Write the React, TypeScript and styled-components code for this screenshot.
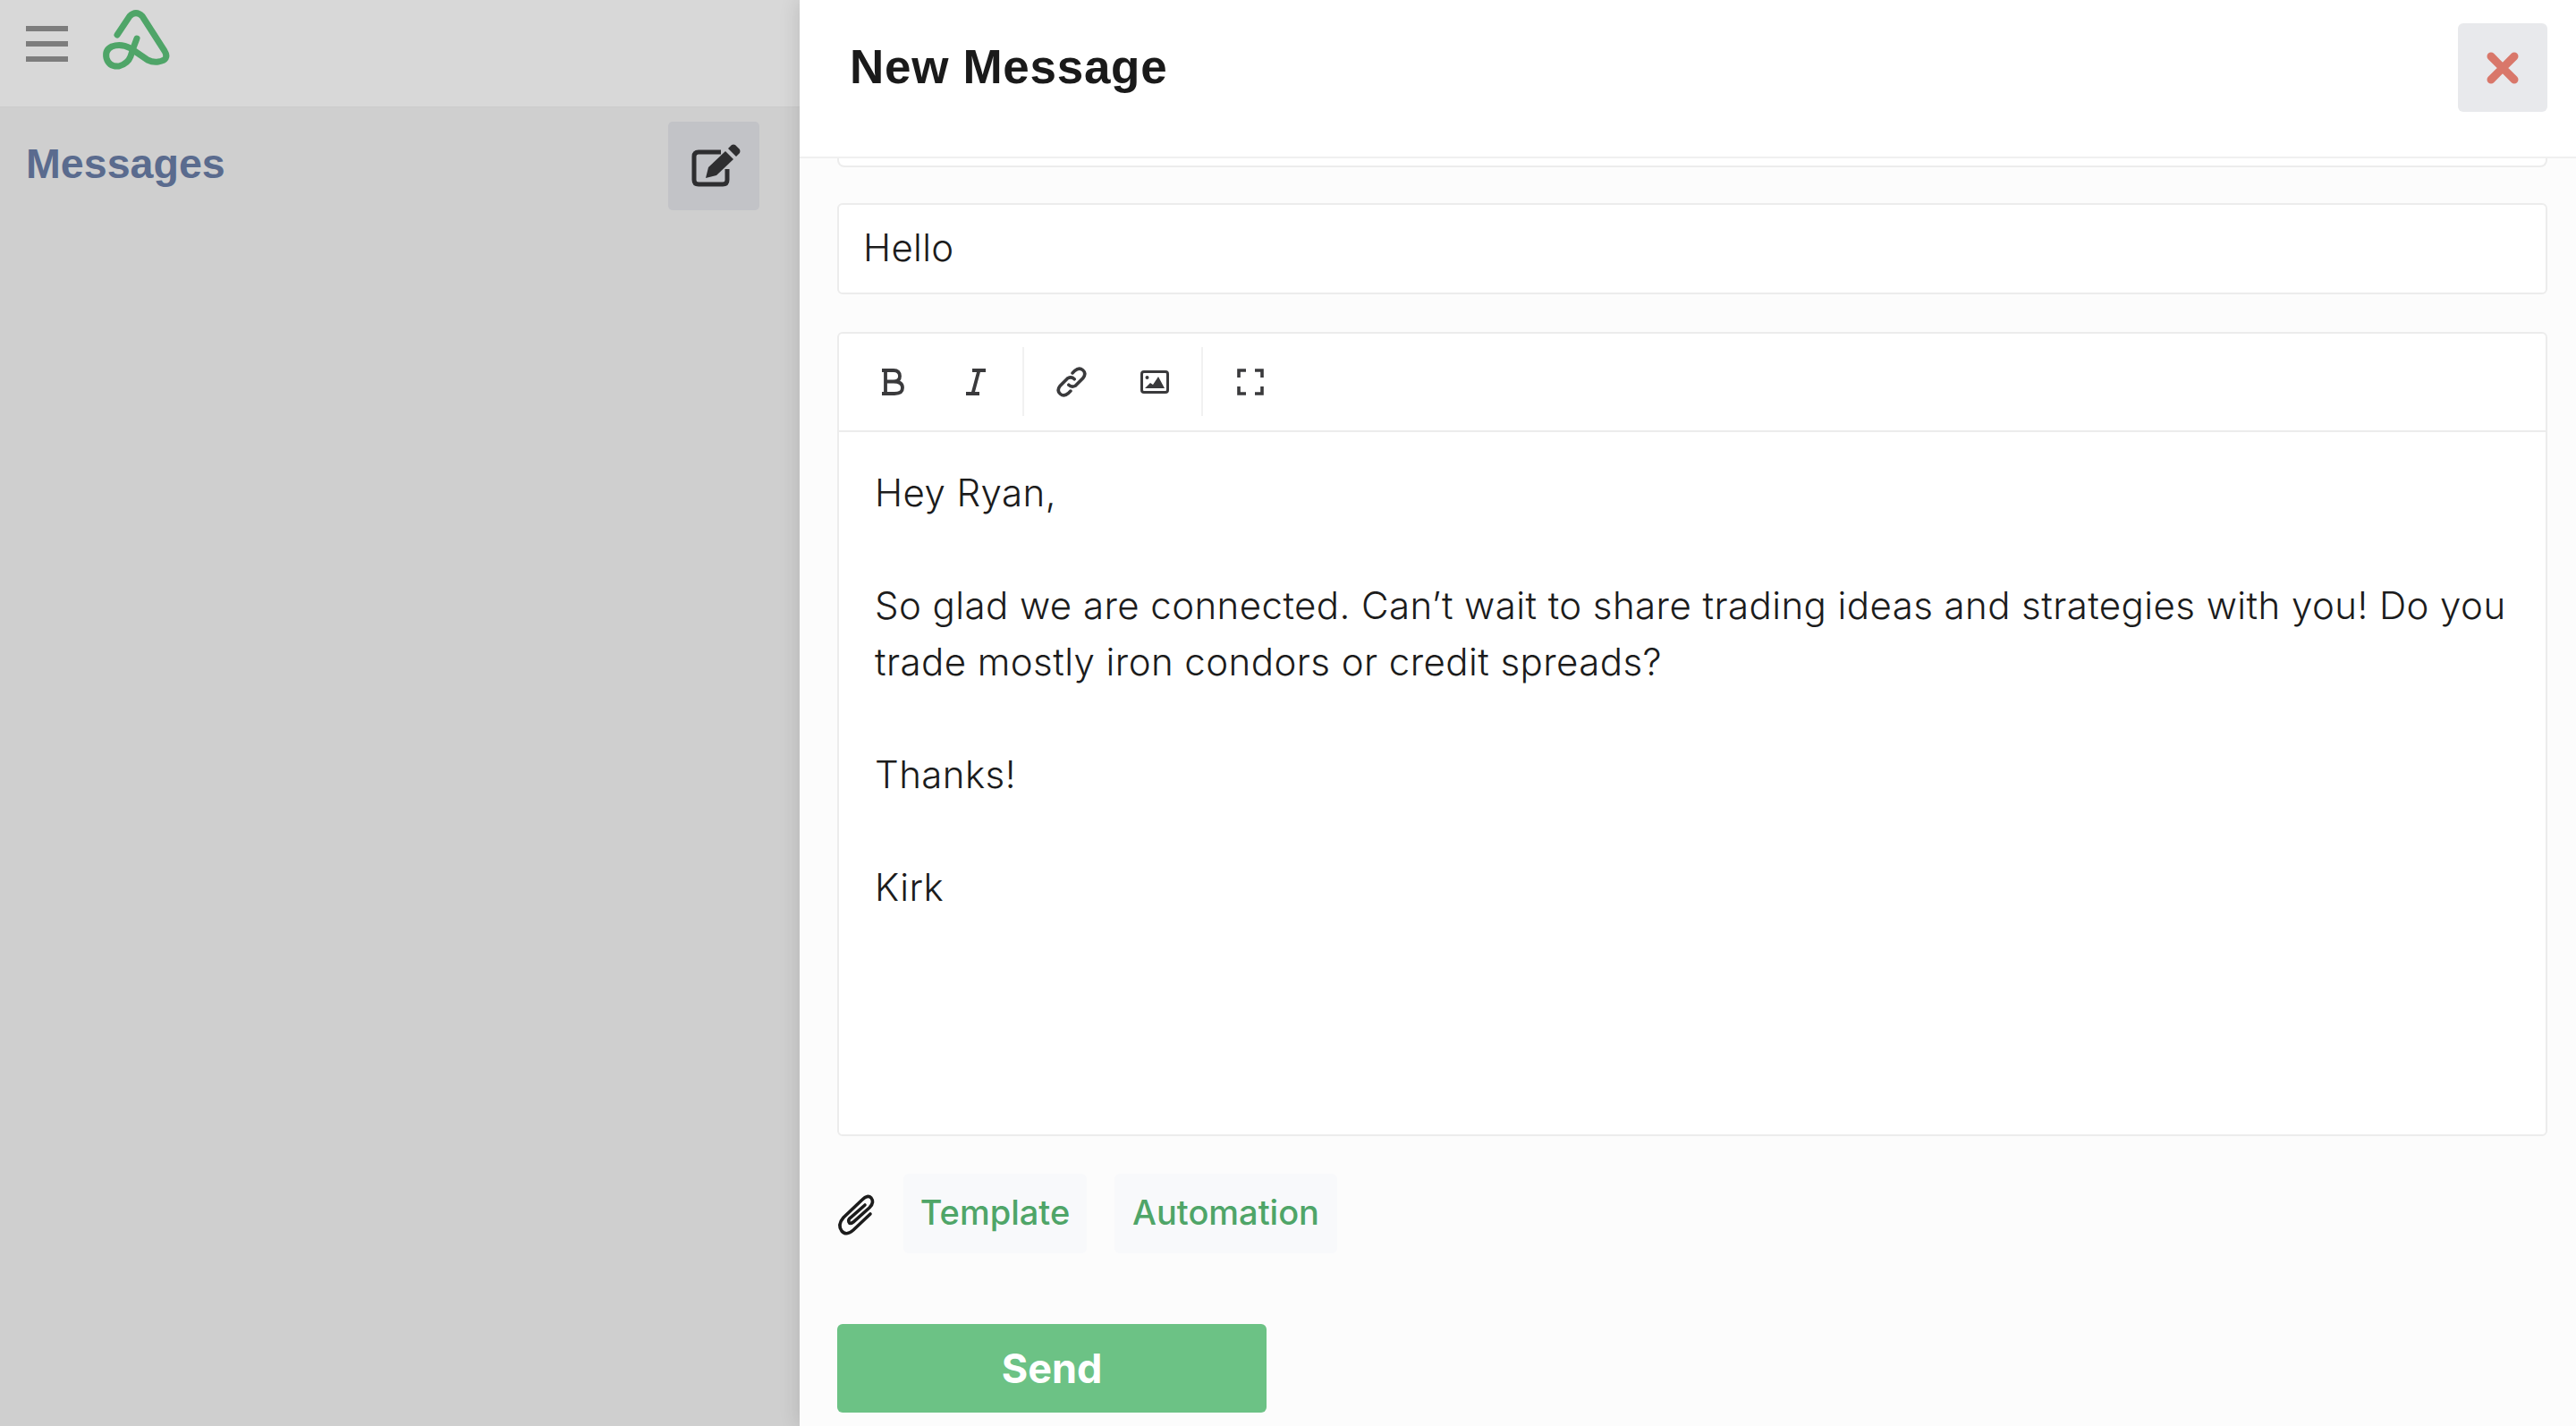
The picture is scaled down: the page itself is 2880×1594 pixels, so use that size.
import React from "react";
import styled, { createGlobalStyle } from "styled-components";

const Global = createGlobalStyle`
  html, body { margin: 0; padding: 0; height: 100%; overflow: hidden; background: #fcfcfc; }
  #root { height: 100%; }
  * { box-sizing: border-box; }
`;

const Page = styled.div`
  display: flex;
  width: 2880px;
  height: 1594px;
  overflow: hidden;
  font-family: Inter, "Liberation Sans", sans-serif;
`;

const Sidebar = styled.aside`
  width: 894px;
  flex: none;
  background: #cfcfcf;
  display: flex;
  flex-direction: column;
`;

const TopBar = styled.div`
  height: 120px;
  background: #d8d8d8;
  border-bottom: 1px solid #cbcbcb;
  display: flex;
  align-items: flex-start;
  padding-left: 29px;
`;

const Burger = styled.div`
  width: 47px;
  margin-top: 29px;
  display: flex;
  flex-direction: column;
  gap: 11px;
`;

const BurgerLine = styled.span`
  display: block;
  height: 6px;
  background: #7d7d7d;
`;

const Logo = styled.svg`
  width: 110px;
  height: 90px;
  margin: 1px 0 0 23px;
  flex: none;
`;

const SideHeader = styled.div`
  display: flex;
  justify-content: space-between;
  align-items: flex-start;
  padding: 16px 45px 0 29px;
`;

const SideTitle = styled.h2`
  margin: 20px 0 0;
  font: 700 46.6px/54px "Liberation Sans", Arial, sans-serif;
  color: #5a6b8e;
`;

const ComposeButton = styled.div`
  width: 102px;
  height: 99px;
  border-radius: 5px;
  background: #c2c3c7;
  display: flex;
  align-items: center;
  justify-content: center;
`;

const Panel = styled.main`
  flex: 1;
  min-width: 0;
  display: flex;
  flex-direction: column;
  background: #fcfcfc;
  box-shadow: 0 0 22px rgba(0, 0, 0, 0.14);
  position: relative;
`;

const PanelHeader = styled.header`
  height: 177px;
  flex: none;
  background: #fff;
  border-bottom: 2px solid #f0f0f0;
  display: flex;
  align-items: flex-start;
  justify-content: space-between;
  padding: 26px 32px 0 56px;
`;

const PanelTitle = styled.h1`
  margin: 19px 0 0;
  font: 700 53px/60px "Liberation Sans", Arial, sans-serif;
  color: #1a1a1a;
  letter-spacing: 0.7px;
`;

const CloseButton = styled.div`
  width: 100px;
  height: 99px;
  border-radius: 6px;
  background: #e8e9ec;
  display: flex;
  align-items: center;
  justify-content: center;
`;

const PanelBody = styled.div`
  flex: 1;
  min-height: 0;
  padding: 0 32px 0 42px;
  display: flex;
  flex-direction: column;
`;

const ClippedField = styled.div`
  height: 10px;
  border: 2px solid #ececec;
  border-top: none;
  border-radius: 0 0 8px 8px;
  background: #fff;
`;

const SubjectField = styled.div`
  margin-top: 40px;
  height: 102px;
  border: 2px solid #ececec;
  border-radius: 6px;
  background: #fff;
  display: flex;
  align-items: center;
  padding: 0 0 3px 27px;
  font-size: 42px;
  font-weight: 350;
  letter-spacing: 0.3px;
  color: #1c1c1c;
`;

const Editor = styled.section`
  margin-top: 42px;
  height: 899px;
  border: 2px solid #ececec;
  border-radius: 6px;
  background: #fff;
  display: flex;
  flex-direction: column;
`;

const Toolbar = styled.div`
  height: 110px;
  flex: none;
  border-bottom: 2px solid #ececec;
  display: flex;
  align-items: center;
  padding: 0 0 1px 13px;
`;

const ToolButton = styled.div`
  width: 93px;
  height: 60px;
  display: flex;
  align-items: center;
  justify-content: center;
`;

const ToolDivider = styled.span`
  width: 2px;
  height: 77px;
  margin: 0 6px;
  background: #f1f1f1;
`;

const EditorText = styled.div`
  padding: 36px 0 0 40px;
  font-size: 42px;
  font-weight: 350;
  letter-spacing: 0.43px;
  line-height: 63px;
  color: #1c1c1c;
`;

const Para = styled.p`
  margin: 0 0 63px;
`;

const ActionRow = styled.div`
  margin-top: 42px;
  display: flex;
  align-items: center;
`;

const ClipIcon = styled.svg`
  width: 70px;
  height: 70px;
  margin-left: -11px;
  margin-right: 15px;
  flex: none;
`;

const GhostButton = styled.div<{ $width: number }>`
  width: ${(p) => p.$width}px;
  height: 89px;
  margin-right: 31px;
  padding-bottom: 4px;
  border-radius: 6px;
  background: #f8f9fb;
  color: #4fa568;
  font-size: 38px;
  font-weight: 500;
  display: flex;
  align-items: center;
  justify-content: center;
`;

const SendButton = styled.div`
  margin-top: 79px;
  width: 480px;
  height: 99px;
  border-radius: 6px;
  background: #6cc285;
  color: #fff;
  font-size: 45px;
  font-weight: 700;
  display: flex;
  align-items: center;
  justify-content: center;
`;

const ink = "#3a3a3c";

export default function App() {
  return (
    <Page>
      <Global />
      <Sidebar>
        <TopBar>
          <Burger>
            <BurgerLine />
            <BurgerLine />
            <BurgerLine />
          </Burger>
          <Logo viewBox="0 0 110 90" fill="none">
            <path
              d="M32 38 L46 17 Q53 10 60 17 L85 56 Q91 66 78 68 Q72 69 66 66 L47 53 Q36 47 26 51 Q18 55 20 64 Q23 74 34 73 Q44 70 47 62 Q50 52 54 42"
              stroke="#4fa568"
              strokeWidth="7"
              strokeLinecap="round"
              strokeLinejoin="round"
            />
          </Logo>
        </TopBar>
        <SideHeader>
          <SideTitle>Messages</SideTitle>
          <ComposeButton>
            <svg width="100" height="90" viewBox="0 0 100 90" fill="none">
              <path d="M58 29 H33 Q28 29 28 34 V60 Q28 65 33 65 H60 Q65 65 65 60 V48" stroke="#2e2e30" strokeWidth="5" />
              <path d="M41 58 L44 46 L63 28 L72 37 L53 55 Z" fill="#2e2e30" />
              <path d="M66 25 L70 21 Q72 20 74 21 L79 26 Q80 28 79 30 L75 34 Z" fill="#2e2e30" />
            </svg>
          </ComposeButton>
        </SideHeader>
      </Sidebar>
      <Panel>
        <PanelHeader>
          <PanelTitle>New Message</PanelTitle>
          <CloseButton>
            <svg width="36" height="36" viewBox="0 0 36 36" fill="none">
              <path d="M5 5 L31 31 M31 5 L5 31" stroke="#d9776a" strokeWidth="9" strokeLinecap="round" />
            </svg>
          </CloseButton>
        </PanelHeader>
        <PanelBody>
          <ClippedField />
          <SubjectField>Hello</SubjectField>
          <Editor>
            <Toolbar>
              <ToolButton>
                <svg width="26" height="32" viewBox="0 0 26 32" fill="none" stroke={ink} strokeWidth="3.8">
                  <path d="M1 3 H14 Q21 3 21 9.5 Q21 15.5 14 15.5 H5 M14 15.5 Q24 15.5 24 22.5 Q24 29 15 29 H1 M5 3 V29" />
                </svg>
              </ToolButton>
              <ToolButton>
                <svg width="24" height="32" viewBox="0 0 24 32" fill="none" stroke={ink} strokeWidth="3.8">
                  <path d="M8 3 H23 M1 29 H16 M15.5 3 L8.5 29" />
                </svg>
              </ToolButton>
              <ToolDivider />
              <ToolButton>
                <svg width="36" height="36" viewBox="0 0 34 34" fill="none" stroke={ink} strokeWidth="3.4" strokeLinecap="round">
                  <path d="M14 20 Q17 23 21 21 L29 13 Q33 8 29 4.5 Q25 1 20.5 5 L18 7.5" />
                  <path d="M20 14 Q17 11 13 13 L5 21 Q1 26 5 29.5 Q9 33 13.5 29 L16 26.5" />
                </svg>
              </ToolButton>
              <ToolButton>
                <svg width="32" height="26" viewBox="0 0 32 26" fill="none">
                  <rect x="1.5" y="1.5" width="29" height="23" rx="2.5" stroke={ink} strokeWidth="3" />
                  <circle cx="7.5" cy="8" r="2" fill={ink} />
                  <path d="M5 20 L11 14 L14 16 L20 7 L27 20 Z" fill={ink} />
                </svg>
              </ToolButton>
              <ToolDivider />
              <ToolButton>
                <svg width="30" height="30" viewBox="0 0 30 30" fill="none" stroke={ink} strokeWidth="3.6">
                  <path d="M2 10 V2 H10 M20 2 H28 V10 M28 20 V28 H20 M10 28 H2 V20" />
                </svg>
              </ToolButton>
            </Toolbar>
            <EditorText>
              <Para>Hey Ryan,</Para>
              <Para>
                So glad we are connected. Can’t wait to share trading ideas and strategies with you! Do you
                <br />
                trade mostly iron condors or credit spreads?
              </Para>
              <Para>Thanks!</Para>
              <Para>Kirk</Para>
            </EditorText>
          </Editor>
          <ActionRow>
            <ClipIcon viewBox="0 0 70 70" fill="none">
              <path
                d="M48 35 L29 53 Q21 60 16 54 Q11 47 18 39 L39 19 Q45 13 49 17 Q53 22 47 28 L29 44 Q25 47 24 44 Q23 41 26 39 L42 25"
                stroke="#1c1c1c"
                strokeWidth="3.6"
                strokeLinecap="round"
              />
            </ClipIcon>
            <GhostButton $width={205}>Template</GhostButton>
            <GhostButton $width={249}>Automation</GhostButton>
          </ActionRow>
          <SendButton>Send</SendButton>
        </PanelBody>
      </Panel>
    </Page>
  );
}
